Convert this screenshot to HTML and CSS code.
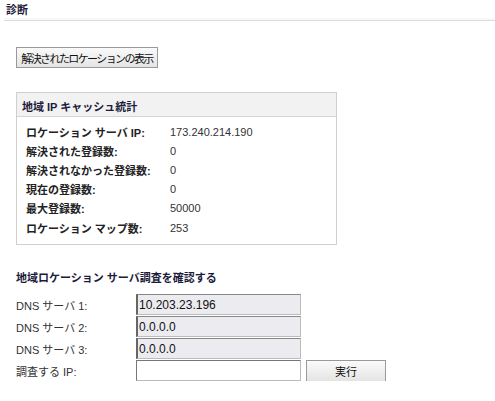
FILE: index.html
```html
<!DOCTYPE html>
<html>
<head>
    <title>診断</title>
    <link rel="stylesheet" href="styles.css">
</head>
<body>
    <div class="page-title">診断</div>

    <div class="content">
        <button class="btn show-btn">解決されたロケーションの表示</button>

        <div class="stats-box">
            <div class="stats-head">地域 IP キャッシュ統計</div>
            <table class="stats">
                <tr><th>ロケーション サーバ IP:</th><td>173.240.214.190</td></tr>
                <tr><th>解決された登録数:</th><td>0</td></tr>
                <tr><th>解決されなかった登録数:</th><td>0</td></tr>
                <tr><th>現在の登録数:</th><td>0</td></tr>
                <tr><th>最大登録数:</th><td>50000</td></tr>
                <tr><th>ロケーション マップ数:</th><td>253</td></tr>
            </table>
        </div>

        <h3 class="section-title">地域ロケーション サーバ調査を確認する</h3>

        <div class="lookup">
            <label>DNS サーバ 1:</label>
            <input class="field readonly" type="text" value="10.203.23.196" readonly>
            <span></span>

            <label>DNS サーバ 2:</label>
            <input class="field readonly" type="text" value="0.0.0.0" readonly>
            <span></span>

            <label>DNS サーバ 3:</label>
            <input class="field readonly" type="text" value="0.0.0.0" readonly>
            <span></span>

            <label>調査する IP:</label>
            <input class="field" type="text" value="">
            <button class="btn run-btn">実行</button>
        </div>
    </div>
</body>
</html>
```

FILE: styles.css
```css
body {
    margin: 0;
    font-family: "Liberation Sans", "Noto Sans CJK JP", sans-serif;
    font-size: 11px;
    color: #222;
    background: #fff;
}
.page-title {
    margin-left: 4px;
    padding: 4px 2px 3px;
    font-weight: bold;
    color: #1c1c3a;
    border-bottom: 1px solid #dcdcdc;
    box-shadow: 0 -2px 0 #f8f8f8 inset;
    line-height: 13px;
}
.content {
    padding: 26px 16px 0;
}
.btn {
    font-family: inherit;
    font-size: 11px;
    color: #111;
    background: linear-gradient(#fafafa, #e4e4e4);
    border: 1px solid #9a9a9a;
    border-radius: 0;
    padding: 0;
    white-space: nowrap;
    cursor: pointer;
}
.show-btn {
    width: 142px;
    height: 21px;
    display: block;
    letter-spacing: -1.6px;
}
.stats-box {
    width: 319px;
    margin-top: 24px;
    border: 1px solid #cfcfcf;
}
.stats-head {
    background: #f2f2f2;
    border-bottom: 1px solid #d4d4d4;
    padding: 5px 5px 0;
    height: 18px;
    font-weight: bold;
    color: #1c1c3a;
}
.stats {
    border-collapse: collapse;
    margin: 5px 0 7px 9px;
}
.stats th {
    text-align: left;
    font-weight: bold;
    width: 144px;
    padding: 0;
    height: 19.2px;
    color: #222;
}
.stats td {
    padding: 0;
    color: #333;
}
.section-title {
    margin: 24px 0 9px;
    font-size: 11px;
    font-weight: bold;
    color: #1c1c3a;
}
.lookup {
    display: grid;
    grid-template-columns: 120px 165px 86px;
    grid-auto-rows: 21px;
    row-gap: 1px;
    align-items: center;
}
.lookup label {
    color: #333;
}
.field {
    box-sizing: border-box;
    width: 165px;
    height: 21px;
    margin: 0;
    padding: 0 2px;
    font-family: inherit;
    font-size: 12px;
    color: #111;
    background: #fff;
    border: 1px solid #bbb;
    border-top-color: #777;
    border-left-color: #777;
}
.field.readonly {
    background: #ececf0;
    border-left: 2px solid #666;
    border-top: 1px solid #888;
    padding-left: 1px;
}
.run-btn {
    width: 80px;
    height: 22px;
    margin-left: 5px;
}
```
